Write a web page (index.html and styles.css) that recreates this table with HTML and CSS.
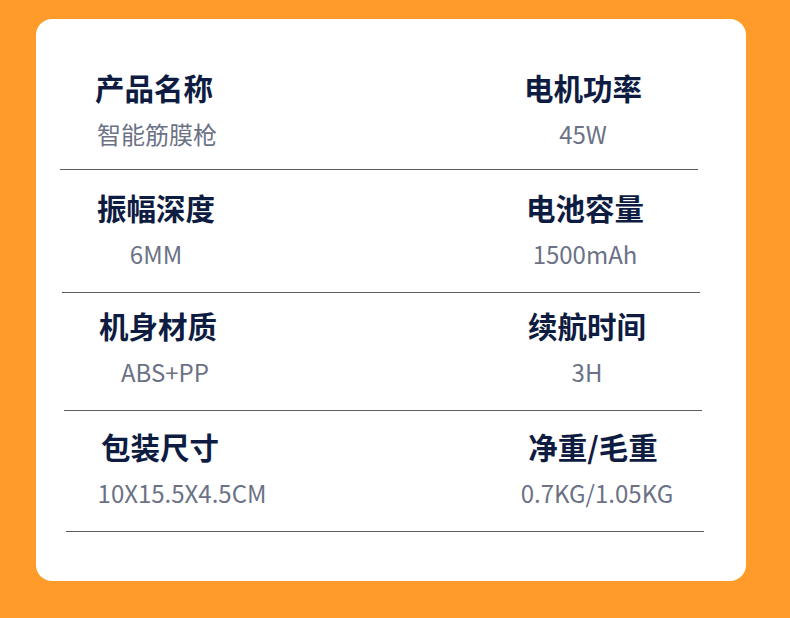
FILE: index.html
```html
<!DOCTYPE html>
<html lang="zh-CN">
<head>
<meta charset="utf-8">
<title>产品参数</title>
<link rel="stylesheet" href="styles.css">
</head>
<body>
<div class="card">
  <div class="row">
    <div class="cell left"><div class="title">产品名称</div><div class="val nudge-x">智能筋膜枪</div></div>
    <div class="cell right"><div class="title">电机功率</div><div class="val">45W</div></div>
  </div>
  <div class="row">
    <div class="cell left"><div class="title">振幅深度</div><div class="val">6MM</div></div>
    <div class="cell right"><div class="title">电池容量</div><div class="val">1500mAh</div></div>
  </div>
  <div class="row">
    <div class="cell left"><div class="title">机身材质</div><div class="val nudge-s">ABS+PP</div></div>
    <div class="cell right"><div class="title">续航时间</div><div class="val">3H</div></div>
  </div>
  <div class="row">
    <div class="cell left"><div class="title">包装尺寸</div><div class="val nudge-l">10X15.5X4.5CM</div></div>
    <div class="cell right"><div class="title nudge-t">净重/毛重</div><div class="val nudge-m">0.7KG/1.05KG</div></div>
  </div>
</div>
</body>
</html>
```
FILE: styles.css
```css
html, body {
  margin: 0;
  padding: 0;
}
body {
  background: #ff9b2b;
  width: 790px;
  height: 618px;
  overflow: hidden;
  font-family: "Noto Sans CJK SC", "Noto Sans", sans-serif;
}
.card {
  box-sizing: border-box;
  margin: 19px 0 0 36px;
  width: 710px;
  height: 562px;
  background: #ffffff;
  border-radius: 16px;
  padding-top: 31px;
}
.row {
  box-sizing: border-box;
  width: 638px;
  height: 120px;
  margin-left: 24px;
  padding-top: 19px;
  border-bottom: 1.5px solid #5b5d63;
  display: grid;
  grid-template-columns: 188px 241px 188px;
}
.row:nth-child(2) { margin-left: 26px; height: 123px; padding-top: 19px; }
.row:nth-child(3) { margin-left: 28px; height: 118px; padding-top: 14px; }
.row:nth-child(4) { margin-left: 30px; height: 121px; padding-top: 17px; }
.cell {
  display: flex;
  flex-direction: column;
  align-items: center;
}
.left { grid-column: 1; }
.right { grid-column: 3; }
.title {
  font-size: 29.5px;
  line-height: 36px;
  font-weight: 700;
  color: #0e1c42;
  white-space: nowrap;
}
.val {
  margin-top: 14px;
  font-size: 24px;
  line-height: 30px;
  color: #6b7286;
  white-space: nowrap;
}
.nudge-x { padding-left: 6px; }
.nudge-s { padding-left: 14px; }
.nudge-l { padding-left: 44px; }
.nudge-m { padding-left: 16px; }
.nudge-t { padding-left: 8px; }
```
